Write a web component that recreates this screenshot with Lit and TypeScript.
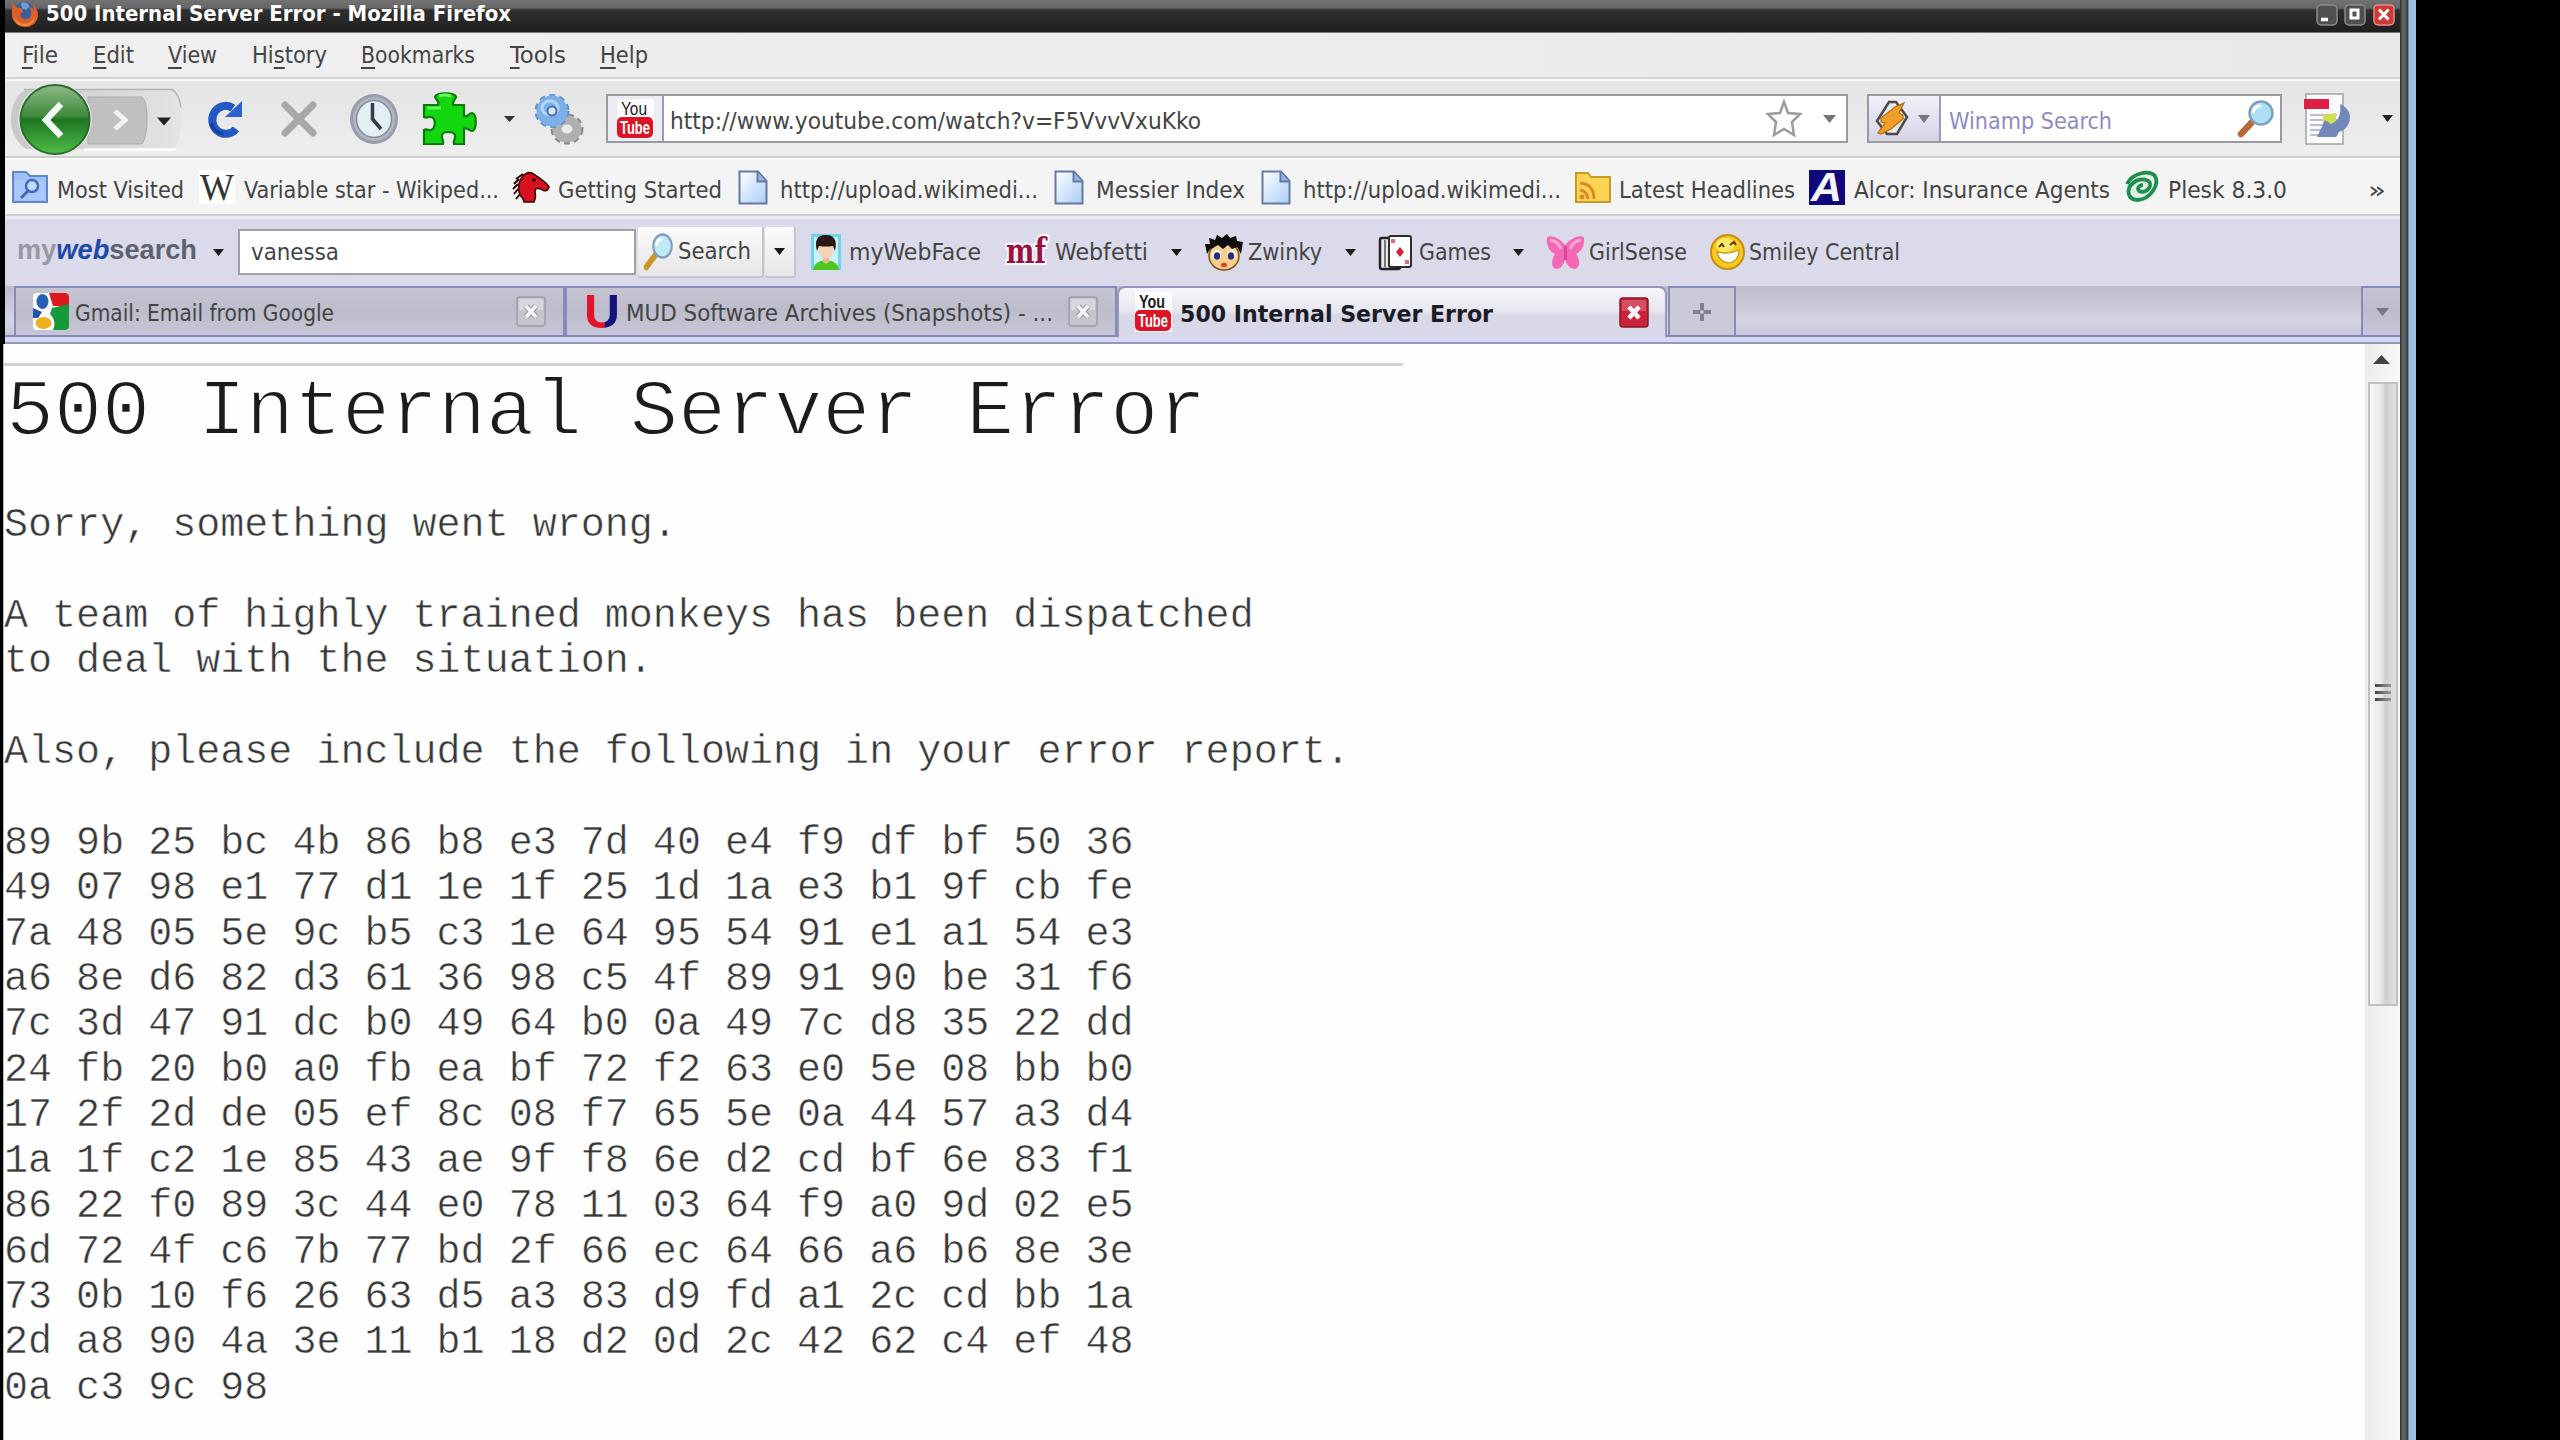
import { LitElement, html, svg, css, TemplateResult } from "lit";
import { customElement, property, query } from "lit/decorators.js";

/** One line of text condensed or widened to an exact width. */
@customElement("fit-text")
class FitText extends LitElement {
  @property({ type: Number }) w = 100;
  @query("span") span!: HTMLSpanElement;
  static styles = css`
    :host { display: block; white-space: pre; overflow: visible; }
    span { display: inline-block; transform-origin: 0 50%; }
  `;
  render() {
    return html`<span><slot></slot></span>`;
  }
  updated() {
    this.style.width = this.w + "px";
    this.span.style.transform = "none";
    const natural = this.span.getBoundingClientRect().width;
    if (natural > 0) this.span.style.transform = `scaleX(${this.w / natural})`;
  }
}

type Item = [number, TemplateResult];

const WINDOW_LEFT = 5;

/** Lays items out in a row; each cell runs up to where the next one starts. */
const cells = (items: Item[], left = WINDOW_LEFT) => html`
  ${items.map(([x, content], i) => {
    const next = items[i + 1];
    const lead = i === 0 ? x - left : 0;
    const width = next ? `width:${next[0] - x}px;` : "";
    return html`<div class="cell" style="${width}margin-left:${lead}px">${content}</div>`;
  })}
`;

const text = (label: string | TemplateResult, w: number) => html`<fit-text .w=${w}>${label}</fit-text>`;

const icon = (w: number, h: number, box: string, body: TemplateResult) => html`
  <svg width=${w} height=${h} viewBox=${box} preserveAspectRatio="none">${body}</svg>`;

const tri = (w: number, h: number, color: string) =>
  icon(w, h, "0 0 10 6", svg`<path d="M0 0H10L5 6Z" fill=${color}/>`);

const firefox = icon(27, 27, "0 0 28 28", svg`
  <circle cx="14" cy="12" r="11" fill="#3b5f9c"/>
  <path d="M10 3c4-3 9-1 9 3l-3 3-4-1z" fill="#6aa0d8"/>
  <path d="M2 2c2 3 3 4 5 5 4 0 6 2 5 5-3 1-3 4 0 6 5 3 10-1 9-7-1-3-2-4-3-5 3 0 5 2 6 4 0-3-1-5-2-7 4 3 6 7 6 11 0 8-6 13-13 13S1 22 1 14c0-4 0-8 1-12z" fill="#dd5f28"/>
  <path d="M3 14c1 7 8 11 14 9 4-1 7-4 8-8 0 7-5 11-11 11S3 22 3 14z" fill="#f08c34"/>`);

const navButtons = icon(174, 76, "10 80 174 76", svg`
  <defs>
    <linearGradient id="gb" x1="0" y1="0" x2="0" y2="1">
      <stop offset="0" stop-color="#8fb98a"/><stop offset=".45" stop-color="#3f8a3c"/>
      <stop offset=".5" stop-color="#1d7420"/><stop offset="1" stop-color="#4fbf4a"/>
    </linearGradient>
    <linearGradient id="gk" x1="0" y1="0" x2="1" y2="0">
      <stop offset="0" stop-color="#c8c8c8"/><stop offset="1" stop-color="#e4e4e4"/>
    </linearGradient>
  </defs>
  <path d="M26 88H174q8 12 8 30t-8 30H26Q11 138 11 118T26 88z" fill="url(#gk)"/>
  <path d="M24 88.500H172q7 4 9 18" fill="none" stroke="#b4b4b4" stroke-width="1.500"/>
  <path d="M84 148.500H176" stroke="#fff" stroke-width="2.500"/>
  <path d="M88 96H142q5 4 5 22t-5 25H88z" fill="#c0c0c0" stroke="#ababab"/>
  <path d="M115 110l10 9-10 9" fill="none" stroke="#f2f2f2" stroke-width="5"/>
  <ellipse cx="55" cy="118.500" rx="37" ry="36.500" fill="#dfe3df"/>
  <ellipse cx="55" cy="118.500" rx="34.500" ry="34.500" fill="url(#gb)" stroke="#2c6a2e" stroke-width="2"/>
  <path d="M61 103L46 119l15 16" fill="none" stroke="#f4faf4" stroke-width="6.500"/>
  <path d="M157 116.500h14l-7 8z" fill="#222"/>`);

const reload = icon(38, 38, "0 0 38 38", svg`
  <path d="M30 29A13.500 14 0 1 1 27 8" fill="none" stroke="#2257c4" stroke-width="8"/>
  <path d="M36 1V17H19z" fill="#2b62cf"/><path d="M5 23q3 10 13 11" fill="none" stroke="#123f9c" stroke-width="3"/>`);

const stop = icon(38, 38, "0 0 38 38", svg`
  <path d="M5 5L33 33M33 5L5 33" stroke="#a8a8a8" stroke-width="7" stroke-linecap="round"/>`);

const clock = icon(50, 52, "0 0 50 52", svg`
  <ellipse cx="25" cy="26" rx="24" ry="25" fill="#979da9"/>
  <ellipse cx="25" cy="26" rx="21" ry="22" fill="#b0b6c2"/>
  <ellipse cx="25" cy="26" rx="17.500" ry="18.500" fill="#e3eef5" stroke="#868d9a" stroke-width="1.500"/>
  <path d="M23.500 10V26L32 36" fill="none" stroke="#333c48" stroke-width="3.500"/>`);

const puzzle = icon(55, 54, "0 0 55 54", svg`
  <path d="M2 13H16c2-3-2-5-3-8 1-5 20-5 21 0-1 3-4 5-3 8H42V24c3 2 5-3 8-3 5 1 5 17 0 18-3 0-5-4-8-3V52H32c-1-4 2-5 1-9-2-4-12-4-13 0-1 4 2 5 1 9H2V38c3-2 4 1 7 0 5-2 5-12 0-13-3-1-4 2-7 0z"
    fill="#12d60e" stroke="#0a7a0a" stroke-width="2.200"/>
  <path d="M5 16H19M17 4q6-2 12 0" stroke="#6cf562" stroke-width="3" fill="none"/>`);

const gears = icon(50, 52, "0 0 50 52", svg`
  <ellipse cx="33" cy="36" rx="13" ry="12" fill="none" stroke="#8a8a8a" stroke-width="7" stroke-dasharray="5 3.500"/>
  <ellipse cx="33" cy="36" rx="10" ry="9" fill="none" stroke="#b0b0b0" stroke-width="9"/>
  <ellipse cx="18" cy="18" rx="15" ry="14.500" fill="none" stroke="#5f93d0" stroke-width="5" stroke-dasharray="5.500 4"/>
  <ellipse cx="18" cy="18" rx="10" ry="10" fill="none" stroke="#7db0e8" stroke-width="11"/>
  <ellipse cx="16" cy="15" rx="8" ry="7" fill="none" stroke="#b5d6f7" stroke-width="3"/>
  <ellipse cx="18" cy="18" rx="4.500" ry="4.500" fill="#dcebf8" stroke="#4472b0" stroke-width="2"/>`);

const youtube = icon(37, 40, "0 0 37 40", svg`
  <rect width="37" height="40" fill="#fff" opacity=".8"/>
  <text x="4" y="15.500" font-family="Liberation Sans Narrow, Liberation Sans" font-size="18" textLength="26" lengthAdjust="spacingAndGlyphs" fill="#222">You</text>
  <rect x="0" y="18" width="36" height="21" rx="5" fill="#dc1426"/>
  <text x="3" y="35" font-family="Liberation Sans" font-weight="bold" font-size="18" textLength="30" lengthAdjust="spacingAndGlyphs" fill="#fff">Tube</text>`);

const star = icon(36, 37, "0 0 36 37", svg`
  <path d="M18 2L22 13 34 14 26 22 28 35 18 29 8 35 10 22 2 14 14 13z" fill="#fcfcfc" stroke="#9b9b9b" stroke-width="2.500"/>`);

const winamp = icon(34, 37, "0 0 34 37", svg`
  <path d="M14 2H21L32 17 22 34H12L2 21z" fill="#e9e9e9" stroke="#4a4a4a" stroke-width="2.500"/>
  <path d="M29 3L20 7 6 18 6 22 10 23 3 33 6 34 16 29 28 19 28 15 24 13z" fill="#f0a028" stroke="#b26a10" stroke-width="1.200"/>`);

const glass = (w: number, h: number, handle: string, lens: string) => icon(w, h, "0 0 36 37", svg`
  <path d="M3 34L15 21" stroke=${handle} stroke-width="6.500" stroke-linecap="round"/>
  <ellipse cx="23" cy="13" rx="11.500" ry="11.500" fill=${lens} stroke="#7f9fbe" stroke-width="2.500"/>
  <path d="M15 13q1-7 8-7" fill="none" stroke="#fff" stroke-width="3"/>`);

const pageIcon = icon(50, 52, "0 0 50 52", svg`
  <rect x="3" y="1" width="37" height="50" fill="#fafafa" stroke="#a2a2a2" stroke-width="1.500"/>
  <rect x="1" y="6" width="25" height="10" fill="#dd1f46"/>
  <path d="M7 22H34M7 27H34M7 32H34M7 37H34M7 42H34" stroke="#b9bfcc" stroke-width="2"/>
  <path d="M20 22L33 20V38H20z" fill="#cfe055"/>
  <path d="M37 11q13 6 9 19-3 7-10 9l-3 5H14l8-17 6 4q11-4 9-20z" fill="#7387b8"/>`);

const searchFolder = icon(36, 32, "0 0 36 32", svg`
  <path d="M1 1H14L18 5H35V31H1z" fill="#9ec0f7" stroke="#5f86cf" stroke-width="2"/>
  <path d="M3 9H33V29H3z" fill="#a9c8fa"/>
  <circle cx="20" cy="15" r="6" fill="#c6dcfc" stroke="#4468bd" stroke-width="2.500"/>
  <path d="M16 20L9 27" stroke="#4468bd" stroke-width="3"/>`);

const wiki = icon(36, 34, "0 0 36 34", svg`
  <rect width="36" height="34" fill="#fff"/>
  <text x="1" y="30" font-family="Liberation Serif" font-size="38" textLength="34" lengthAdjust="spacingAndGlyphs" fill="#333">W</text>`);

const dino = icon(37, 32, "0 0 37 32", svg`
  <path d="M14 2C19 0 21 4 25 6c4 3 8 5 11 10-1 4-5 5-8 2-3-1-6-1-6 2 0 4 2 6-1 11H11C10 26 9 27 7 24 4 16 6 6 14 2z" fill="#d5121e" stroke="#3a0508" stroke-width="1.600"/>
  <path d="M10 3L3 8M6 8L1 13M5 13L0 18M5 18L1 23M7 23L3 28" stroke="#2b0507" stroke-width="2"/>
  <circle cx="21" cy="9" r="1.800" fill="#200"/>`);

const doc = icon(30, 35, "0 0 30 35", svg`
  <defs><linearGradient id="gd" x1="0" y1="0" x2="1" y2="1">
    <stop offset="0" stop-color="#fff"/><stop offset="1" stop-color="#a9cdf6"/></linearGradient></defs>
  <path d="M1.500 1.500H20L28.500 11V33.500H1.500z" fill="url(#gd)" stroke="#66799f" stroke-width="2"/>
  <path d="M19.500 2V11.500H28" fill="#93b4e8" stroke="#66799f" stroke-width="2"/>`);

const feed = icon(36, 33, "0 0 36 33", svg`
  <path d="M1 2H13L16 6H35V31H1z" fill="#fbd552" stroke="#c99a2a" stroke-width="2"/>
  <path d="M5 12q14 1 14 16M5 19q7 1 8 9" fill="none" stroke="#e0882a" stroke-width="3"/>
  <circle cx="7" cy="26" r="2.500" fill="#e0882a"/>`);

const alcor = icon(36, 35, "0 0 36 35", svg`
  <rect width="36" height="35" fill="#10087a"/>
  <text x="2" y="31" font-family="Liberation Sans" font-style="italic" font-weight="bold" font-size="40" textLength="31" lengthAdjust="spacingAndGlyphs" fill="#f4f4ff">A</text>`);

const plesk = icon(36, 32, "0 0 36 32", svg`
  <ellipse cx="18" cy="16" rx="17" ry="14" fill="#e3f2e8" transform="rotate(-20 18 16)"/>
  <path d="M3 13C9 1 26-1 31 5 36 14 26 28 14 29 3 29 2 18 9 12c7-6 19-4 17 3-2 6-10 8-12 3 0-2 2-4 5-4" fill="none" stroke="#1f8d4d" stroke-width="3.800"/>`);

const webFace = icon(30, 36, "0 0 30 36", svg`
  <rect width="30" height="36" fill="#6fd3ea"/>
  <rect x="3" y="3" width="24" height="31" fill="#c9f1f7"/>
  <path d="M2 36q1-9 13-10 12 1 13 10z" fill="#4cc51e"/>
  <path d="M12 20H18V28L15 30 12 28z" fill="#e9b893"/>
  <ellipse cx="15" cy="15" rx="7.500" ry="9.500" fill="#f6d3b4"/>
  <path d="M6 17C3 4 8 1 15 1s12 4 9 16l-2-5q-7 1-14 0z" fill="#2b1712"/>`);

const webfetti = icon(44, 34, "0 0 44 34", svg`
  <text x="2" y="28" font-family="DejaVu Serif" font-weight="bold" font-size="36" textLength="40" lengthAdjust="spacingAndGlyphs" fill="#9c1046" stroke="#fff" stroke-width="4" paint-order="stroke">mf</text>`);

const zwinky = icon(40, 37, "0 0 40 37", svg`
  <ellipse cx="20" cy="22" rx="15" ry="14" fill="#f6cf8d" stroke="#7a5426" stroke-width="1.500"/>
  <path d="M3 20L1 10 6 10 5 4 11 6 13 1 18 4 23 0 26 4 32 2 33 7 39 8 37 20 33 13 28 15 24 11 19 15 14 11 9 14 6 15z" fill="#0d0d0d"/>
  <ellipse cx="12.500" cy="21" rx="4.500" ry="5" fill="#fff"/><ellipse cx="27.500" cy="21" rx="4.500" ry="5" fill="#fff"/>
  <ellipse cx="13" cy="22" rx="3.200" ry="3.800" fill="#28306e"/><ellipse cx="27" cy="22" rx="3.200" ry="3.800" fill="#28306e"/>
  <ellipse cx="20" cy="31" rx="3" ry="2.200" fill="#d8452c"/>`);

const cards = icon(35, 37, "0 0 35 37", svg`
  <rect x="2" y="4" width="20" height="31" rx="2" fill="#e8e8e8" stroke="#222" stroke-width="2.500"/>
  <path d="M7 6V33" stroke="#777" stroke-width="2"/>
  <rect x="11" y="2" width="22" height="31" rx="2" fill="#fff" stroke="#2c2c2c" stroke-width="2"/>
  <path d="M22 13L26 18 22 23 18 18z" fill="#d3203a"/>
  <path d="M13 5h4v4h-4zM27 26h4v4h-4z" fill="#e46a7c"/>`);

const butterfly = icon(39, 35, "0 0 39 35", svg`
  <path d="M19 10C13 2 3-1 1 3 0 9 3 17 9 19 5 25 5 33 10 34c5 0 8-5 9-10 1 5 5 10 10 10 5-1 6-9 1-15 6-2 9-10 8-16-2-4-12-1-19 7z" fill="#f468b6"/>
  <path d="M4 5q8 1 11 9M35 5q-8 1-11 9" stroke="#fba8d4" stroke-width="3" fill="none"/>
  <path d="M19.500 11V25" stroke="#d9489a" stroke-width="3"/>`);

const smiley = icon(35, 36, "0 0 35 36", svg`
  <ellipse cx="17.500" cy="18" rx="16.500" ry="17" fill="#f6c91c" stroke="#c58d12" stroke-width="2"/>
  <ellipse cx="15" cy="11" rx="9" ry="7" fill="#fdea6a"/>
  <path d="M7 18q11 3 22-2 0 11-10 13Q9 28 7 18z" fill="#fff" stroke="#c8921a" stroke-width="1.200"/>
  <path d="M9 13l3-3 2 3M20 11l4-3 2 3" fill="none" stroke="#5a3c06" stroke-width="2"/>`);

const google = icon(36, 37, "0 0 36 37", svg`
  <rect width="36" height="37" rx="4" fill="#fff"/>
  <path d="M16 0H32q4 0 4 4V13H20z" fill="#dd1820"/>
  <path d="M19 15L36 11V33q0 4-4 4H20q4-9-3-16z" fill="#159a3a"/>
  <path d="M0 15L9 19 5 25H0z" fill="#2653a8"/>
  <ellipse cx="9.500" cy="8.500" rx="6" ry="7.500" fill="#2660b4"/>
  <ellipse cx="10.500" cy="30" rx="8" ry="6" fill="#ecb01e"/>`);

const mud = icon(32, 36, "0 0 32 36", svg`
  <defs><linearGradient id="gm" x1="0" y1="0" x2="1" y2="0">
    <stop offset=".56" stop-color="#e0152c"/><stop offset=".6" stop-color="#15127a"/></linearGradient></defs>
  <text x="-2" y="34" font-family="Liberation Sans" font-weight="bold" font-size="48" textLength="36" lengthAdjust="spacingAndGlyphs" fill="url(#gm)">U</text>`);

const closeBox = (active: boolean) => icon(30, 31, "0 0 30 31", svg`
  <rect x="1" y="1" width="28" height="29" rx="3" fill=${active ? "#c9243a" : "#c5c5cf"} stroke=${active ? "#8c1626" : "#9b9bab"} stroke-width="1.500"/>
  <rect x="3" y="3" width="24" height="11" fill="#fff" opacity=${active ? ".2" : ".3"}/>
  <path d="M10 10L20 21M20 10L10 21" stroke=${active ? "#fff" : "#a2a2ae"} stroke-width=${active ? "4.500" : "6"}/>
  <path d="M10 10L20 21M20 10L10 21" stroke="#f4f4f8" stroke-width="3.500"/>`);

const winButton = (kind: string) => icon(22, 22, "0 0 22 22", svg`
  <rect x="1" y="1" width="20" height="20" rx="4" fill=${kind === "close" ? "#cf3a35" : "#505050"} stroke=${kind === "close" ? "#e58d86" : "#8b8b8b"} stroke-width="1.500"/>
  ${kind === "min" ? svg`<path d="M5 15.500H12" stroke="#fff" stroke-width="3.500"/>` : ""}
  ${kind === "max" ? svg`<rect x="7" y="6" width="7" height="8" fill="none" stroke="#fff" stroke-width="3"/>` : ""}
  ${kind === "close" ? svg`<path d="M6 5.500L15.500 15.500M15.500 5.500L6 15.500" stroke="#fff" stroke-width="3"/>` : ""}`);

const HEX = [
  "89 9b 25 bc 4b 86 b8 e3 7d 40 e4 f9 df bf 50 36",
  "49 07 98 e1 77 d1 1e 1f 25 1d 1a e3 b1 9f cb fe",
  "7a 48 05 5e 9c b5 c3 1e 64 95 54 91 e1 a1 54 e3",
  "a6 8e d6 82 d3 61 36 98 c5 4f 89 91 90 be 31 f6",
  "7c 3d 47 91 dc b0 49 64 b0 0a 49 7c d8 35 22 dd",
  "24 fb 20 b0 a0 fb ea bf 72 f2 63 e0 5e 08 bb b0",
  "17 2f 2d de 05 ef 8c 08 f7 65 5e 0a 44 57 a3 d4",
  "1a 1f c2 1e 85 43 ae 9f f8 6e d2 cd bf 6e 83 f1",
  "86 22 f0 89 3c 44 e0 78 11 03 64 f9 a0 9d 02 e5",
  "6d 72 4f c6 7b 77 bd 2f 66 ec 64 66 a6 b6 8e 3e",
  "73 0b 10 f6 26 63 d5 a3 83 d9 fd a1 2c cd bb 1a",
  "2d a8 90 4a 3e 11 b1 18 d2 0d 2c 42 62 c4 ef 48",
  "0a c3 9c 98",
];

const MESSAGE = [
  "Sorry, something went wrong.",
  "",
  "A team of highly trained monkeys has been dispatched",
  "to deal with the situation.",
  "",
  "Also, please include the following in your error report.",
  "",
  ...HEX,
].join("\n");

@customElement("app-root")
class AppRoot extends LitElement {
  static styles = css`
    :host {
      display: block; width: 2560px; height: 1440px; overflow: hidden; background: #000;
      font-family: "DejaVu Sans Condensed", "DejaVu Sans", sans-serif; font-stretch: condensed;
      font-size: 23px; line-height: 27px; color: #444;
    }
    * { box-sizing: border-box; }
    svg { display: block; flex: none; overflow: visible; }
    .screen { display: flex; height: 1440px; padding-left: 5px; }
    .window { width: 2395px; display: flex; flex-direction: column; flex: none; }
    .frame { width: 8px; background: linear-gradient(90deg, #2c2c2c, #666 35%, #555 75%, #26313c); }
    .glow { width: 8px; background: #9bc0e2; border-left: 1px solid #6f8ba6; }
    .row { display: flex; align-items: center; flex: none; }
    .cell { flex: none; display: flex; align-items: center; }
    .title {
      height: 33px; padding-bottom: 3px; border-bottom: 1px solid #777; color: #fff; font-weight: bold; font-size: 21px;
      background: linear-gradient(#737373 0, #666 8px, #303030 10px, #1f1f1f 100%);
    }
    .menu { height: 46px; background: linear-gradient(90deg, #f0f0f0, #e9e9e9); border-bottom: 2px solid #d2d2d2; }
    u { text-decoration-thickness: 2px; text-underline-offset: 4px; }
    .nav { height: 79px; background: linear-gradient(#e4e4e4, #eee); border-top: 2px solid #f8f8f8; border-bottom: 2px solid #cfcfcf; }
    .nav fit-text { padding-top: 6px; }
    .marks { height: 58px; background: #f4f4f4; border-top: 2px solid #fafafa; border-bottom: 2px solid #d0d0d0; }
    .marks fit-text { padding-top: 6px; }
    .box { height: 49px; display: flex; align-items: center; background: #fff; border: 2px solid #9a9aa2; }
    .url { width: 1242px; }
    .engine { width: 415px; }
    .lead { height: 45px; display: flex; align-items: center; background: #ececf4; border-right: 2px solid #9999c4; }
    .url .lead { width: 56px; padding-left: 9px; }
    .engine .lead { width: 72px; padding-left: 6px; gap: 9px; background: linear-gradient(#f0f0f8, #d4d4e6); }
    .hint { color: #8c8cc4; }
    .mws { height: 70px; padding-bottom: 1px; background: #dadaea; border-top: 3px solid #ececf6; }
    .logo { font-family: "Liberation Sans", Arial, sans-serif; font-weight: bold; font-size: 27px; color: #5d636d; padding-bottom: 4px; }
    .logo .my { color: #9699a2; }
    .logo .web { color: #1c49a8; font-style: italic; }
    .query { width: 398px; height: 46px; padding-left: 11px; border: 2px solid #a0a0a8; background: #fff; display: flex; align-items: center; }
    .push { height: 51px; display: flex; align-items: center; background: linear-gradient(#fbfbfb, #e6e6e6); border-right: 2px solid #c4c4cc; border-bottom: 2px solid #c4c4cc; border-radius: 3px; }
    .push.search { width: 126px; padding-left: 6px; gap: 5px; }
    .push.drop { width: 31px; justify-content: center; }
    .tabs { height: 51px; align-items: stretch; background: linear-gradient(#bcbccb, #d4d4e2 70%, #c8c8da); border-bottom: 2px solid #8488b8; padding-left: 9px; }
    .tab { height: 49px; display: flex; align-items: center; flex: none; border: 2px solid #868abc; border-bottom: 0; background: linear-gradient(#c6c6d2, #bcbccb 45%, #c6c6d6); }
    .tab fit-text { padding-top: 4px; }
    .tab.t1 { width: 551px; padding-left: 17px; }
    .tab.t2 { width: 552px; padding-left: 19px; }
    .tab.t3 {
      width: 550px; height: 52px; padding: 0 0 2px 16px; border-radius: 8px 8px 0 0; border-color: #9496bd;
      background: linear-gradient(#f6f6fc, #e6e6f0 48%, #d8d8e6 54%, #d9d9ec); color: #1c1c26; font-weight: bold;
    }
    .tab.plus { width: 68px; margin-left: 1px; justify-content: center; background: #c9c9d8; }
    .tab.all { width: 39px; margin-left: auto; padding-left: 13px; border-right: 0; }
    .strip { height: 7px; flex: none; background: #d6d8f4; border-bottom: 2px solid #9498bc; }
    .page { flex: 1; min-height: 0; display: flex; margin-left: -2px; background: #fefefe; border-left: 1px solid #bbb; }
    .doc { flex: 1; min-width: 0; font-family: "Liberation Mono", "Courier New", monospace; font-stretch: normal; color: #383838; }
    .rule { height: 3px; width: 1399px; margin-top: 19px; background: #d3d3d3; }
    h1 { margin: 1px 0 0; padding-left: 2px; font-weight: normal; font-size: 80px; line-height: 91px; color: #1c1c1c; -webkit-text-stroke: 1.8px #fefefe; }
    pre { margin: 45px 0 0; font: inherit; font-size: 40.05px; line-height: 45.4px; -webkit-text-stroke: .5px #fefefe; }
    .scroll { width: 35px; display: flex; flex-direction: column; align-items: center; background: linear-gradient(90deg, #ececec, #f8f8f8); }
    .up { height: 38px; display: flex; align-items: center; padding: 0 2px 8px 0; }
    .thumb {
      width: 30px; height: 624px; border: 2px solid #bfbfbf; display: flex; flex-direction: column; align-items: center; justify-content: center;
      gap: 4px; padding-bottom: 4px; background: linear-gradient(90deg, #f6f6f6, #e9e9e9 40%, #cfcfcf 60%, #e2e2e2);
    }
    .thumb i { width: 16px; height: 3px; background: linear-gradient(90deg, #444, #999); }
  `;

  private menuBar() {
    return html`<div class="row menu">${cells([
      [22, text(html`<u>F</u>ile`, 36)],
      [93, text(html`<u>E</u>dit`, 41)],
      [168, text(html`<u>V</u>iew`, 49)],
      [252, text(html`Hi<u>s</u>tory`, 75)],
      [361, text(html`<u>B</u>ookmarks`, 114)],
      [510, text(html`<u>T</u>ools`, 56)],
      [600, text(html`<u>H</u>elp`, 48)],
    ])}</div>`;
  }

  private navBar() {
    const url = html`<div class="box url">
      ${cells([
        [608, html`<div class="lead">${youtube}</div>`],
        [670, text("http://www.youtube.com/watch?v=F5VvvVxuKko", 531)],
        [1766, star],
        [1823, tri(13, 8, "#777")],
      ], 608)}
    </div>`;
    const engine = html`<div class="box engine">
      ${cells([
        [1869, html`<div class="lead">${winamp}${tri(12, 8, "#777")}</div>`],
        [1949, html`<span class="hint">${text("Winamp Search", 163)}</span>`],
        [2238, glass(36, 37, "#b56a3a", "#aee0f5")],
      ], 1869)}
    </div>`;
    return html`<div class="row nav">${cells([
      [10, navButtons],
      [206, reload],
      [280, stop],
      [349, clock],
      [422, puzzle],
      [504, tri(11, 6, "#333")],
      [534, gears],
      [606, url],
      [1867, engine],
      [2303, pageIcon],
      [2382, tri(11, 7, "#222")],
    ])}</div>`;
  }

  private bookmarksBar() {
    return html`<div class="row marks">${cells([
      [12, searchFolder], [57, text("Most Visited", 127)],
      [199, wiki], [244, text("Variable star - Wikiped...", 255)],
      [513, dino], [558, text("Getting Started", 164)],
      [738, doc], [780, text("http://upload.wikimedi...", 258)],
      [1054, doc], [1096, text("Messier Index", 149)],
      [1261, doc], [1303, text("http://upload.wikimedi...", 258)],
      [1575, feed], [1619, text("Latest Headlines", 176)],
      [1809, alcor], [1854, text("Alcor: Insurance Agents", 256)],
      [2124, plesk], [2168, text("Plesk 8.3.0", 119)],
      [2368, text("»", 18)],
    ])}</div>`;
  }

  private searchBar() {
    const arrow = tri(11, 7, "#1a1a1a");
    return html`<div class="row mws">${cells([
      [17, html`<span class="logo">${text(html`<span class="my">my</span><span class="web">web</span>search`, 180)}</span>`],
      [213, arrow],
      [238, html`<div class="query">${text("vanessa", 88)}</div>`],
      [638, html`<div class="push search">${glass(29, 37, "#c8962a", "#bfe9f5")}${text("Search", 73)}</div>`],
      [765, html`<div class="push drop">${arrow}</div>`],
      [811, webFace], [849, text("myWebFace", 132)],
      [1004, webfetti], [1055, text("Webfetti", 93)], [1171, arrow],
      [1204, zwinky], [1248, text("Zwinky", 74)], [1345, arrow],
      [1378, cards], [1419, text("Games", 72)], [1513, arrow],
      [1546, butterfly], [1589, text("GirlSense", 98)],
      [1710, smiley], [1749, text("Smiley Central", 151)],
    ])}</div>`;
  }

  private tabStrip() {
    return html`<div class="row tabs">
      <div class="tab t1">${cells([[33, google], [75, text("Gmail: Email from Google", 259)], [516, closeBox(false)]], 33)}</div>
      <div class="tab t2">${cells([[586, mud], [626, text("MUD Software Archives (Snapshots) - ...", 427)], [1068, closeBox(false)]], 586)}</div>
      <div class="tab t3">${cells([[1135, youtube], [1180, text("500 Internal Server Error", 313)], [1619, closeBox(true)]], 1135)}</div>
      <div class="tab plus">${icon(20, 20, "0 0 20 20", svg`<path d="M10 1V19M1 10H19" stroke="#80808e" stroke-width="4"/><rect x="8.500" y="8.500" width="3" height="3" fill="#d5d5e0"/>`)}</div>
      <div class="tab all">${tri(13, 8, "#77778a")}</div>
    </div>
    <div class="strip"></div>`;
  }

  render() {
    return html`<div class="screen">
      <div class="window">
        <div class="row title">${cells([
          [11, firefox],
          [46, text("500 Internal Server Error - Mozilla Firefox", 465)],
          [2316, winButton("min")],
          [2344, winButton("max")],
          [2373, winButton("close")],
        ])}</div>
        ${this.menuBar()} ${this.navBar()} ${this.bookmarksBar()} ${this.searchBar()} ${this.tabStrip()}
        <div class="page">
          <div class="doc">
            <div class="rule"></div>
            <h1>500 Internal Server Error</h1>
            <pre>${MESSAGE}</pre>
          </div>
          <div class="scroll">
            <div class="up">${icon(17, 9, "0 0 17 9", svg`<path d="M0 9H17L8.500 0Z" fill="#444"/>`)}</div>
            <div class="thumb"><i></i><i></i><i></i></div>
          </div>
        </div>
      </div>
      <div class="frame"></div>
      <div class="glow"></div>
    </div>`;
  }
}
